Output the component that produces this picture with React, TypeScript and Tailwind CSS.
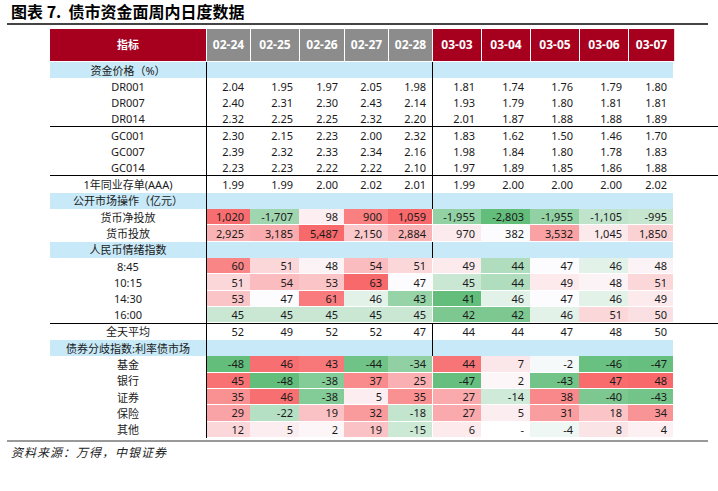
import React from "react";

type Row = {
  label: string;
  vals?: string[];
  section?: boolean;
  line?: boolean;
  scale?: (v: number) => string;
};

const W = [252, 252, 255];
const R = [248, 105, 107];
const G = [99, 190, 123];

function mix(a: number[], b: number[], t: number) {
  const c = Math.max(0, Math.min(1, t));
  return `rgb(${a.map((v, i) => Math.round(v + (b[i] - v) * c)).join(",")})`;
}
function s3(min: number, mid: number, max: number) {
  return (v: number) =>
    v >= mid ? mix(W, R, (v - mid) / (max - mid)) : mix(W, G, (mid - v) / (mid - min));
}
function s2(min: number, max: number) {
  return (v: number) => mix(W, R, (v - min) / (max - min));
}

const netScale = s3(-2803, 0, 1059);
const grossScale = s2(382, 5487);
const sentScale = s3(41, 47, 63);
const bondScale = s3(-48, 0, 48);

const rows: Row[] = [
  { label: "资金价格（%）", section: true },
  { label: "DR001", vals: ["2.04", "1.95", "1.97", "2.05", "1.98", "1.81", "1.74", "1.76", "1.79", "1.80"] },
  { label: "DR007", vals: ["2.40", "2.31", "2.30", "2.43", "2.14", "1.93", "1.79", "1.80", "1.81", "1.81"] },
  { label: "DR014", vals: ["2.32", "2.25", "2.25", "2.32", "2.20", "2.01", "1.87", "1.88", "1.88", "1.89"], line: true },
  { label: "GC001", vals: ["2.30", "2.15", "2.23", "2.00", "2.32", "1.83", "1.62", "1.50", "1.46", "1.70"] },
  { label: "GC007", vals: ["2.39", "2.32", "2.33", "2.34", "2.16", "1.98", "1.84", "1.80", "1.78", "1.83"] },
  { label: "GC014", vals: ["2.23", "2.23", "2.22", "2.22", "2.10", "1.97", "1.89", "1.85", "1.86", "1.88"], line: true },
  { label: "1年同业存单(AAA)", vals: ["1.99", "1.99", "2.00", "2.02", "2.01", "1.99", "2.00", "2.00", "2.00", "2.02"] },
  { label: "公开市场操作（亿元）", section: true },
  { label: "货币净投放", vals: ["1,020", "-1,707", "98", "900", "1,059", "-1,955", "-2,803", "-1,955", "-1,105", "-995"], scale: netScale },
  { label: "货币投放", vals: ["2,925", "3,185", "5,487", "2,150", "2,884", "970", "382", "3,532", "1,045", "1,850"], scale: grossScale },
  { label: "人民币情绪指数", section: true },
  { label: "8:45", vals: ["60", "51", "48", "54", "51", "49", "44", "47", "46", "48"], scale: sentScale },
  { label: "10:15", vals: ["51", "54", "53", "63", "47", "45", "44", "49", "48", "51"], scale: sentScale },
  { label: "14:30", vals: ["53", "47", "61", "46", "43", "41", "46", "47", "46", "49"], scale: sentScale },
  { label: "16:00", vals: ["45", "45", "45", "45", "45", "42", "42", "46", "51", "50"], scale: sentScale, line: true },
  { label: "全天平均", vals: ["52", "49", "52", "52", "47", "44", "44", "47", "48", "50"] },
  { label: "债券分歧指数:利率债市场", section: true },
  { label: "基金", vals: ["-48", "46", "43", "-44", "-34", "44", "7", "-2", "-46", "-47"], scale: bondScale },
  { label: "银行", vals: ["45", "-48", "-38", "37", "25", "-47", "2", "-43", "47", "48"], scale: bondScale },
  { label: "证券", vals: ["35", "46", "-38", "5", "35", "27", "-14", "38", "-40", "-43"], scale: bondScale },
  { label: "保险", vals: ["29", "-22", "19", "32", "-18", "27", "5", "31", "18", "34"], scale: bondScale },
  { label: "其他", vals: ["12", "5", "2", "19", "-15", "6", "-", "-4", "8", "4"], scale: bondScale },
];

const dates = ["02-24", "02-25", "02-26", "02-27", "02-28", "03-03", "03-04", "03-05", "03-06", "03-07"];

const colW = [
  "w-[43px]",
  "w-[49px]",
  "w-[45px]",
  "w-[44px]",
  "w-[45px] border-r border-black",
  "w-[48px]",
  "w-[49px]",
  "w-[49px]",
  "w-[49px]",
  "w-[45px]",
];

const headW = [
  "w-[44px] bg-[#8c8c8c] border-r border-white",
  "w-[49px] bg-[#8c8c8c] border-r border-white",
  "w-[45px] bg-[#8c8c8c] border-r border-white",
  "w-[44px] bg-[#8c8c8c] border-r border-white",
  "w-[44px] bg-[#8c8c8c] border-r border-white",
  "w-[49px] bg-[#a6001e] border-r border-white",
  "w-[49px] bg-[#a6001e] border-r border-white",
  "w-[49px] bg-[#a6001e] border-r border-white",
  "w-[49px] bg-[#a6001e] border-r border-white",
  "w-[46px] bg-[#a6001e] border-r border-[#f3d3da]",
];

const font = { fontFamily: '"Noto Sans", "Noto Sans CJK SC", sans-serif' };

export default function App() {
  return (
    <div className="w-[718px] h-[491px] bg-white text-[#1a1a1a] flex flex-col" style={font}>
      <div className="h-[23px] pl-[11px] pt-[3px]">
        <div
          className="text-[16px] leading-[16px] font-bold text-black"
          style={{ fontFamily: '"Noto Sans CJK SC", "Noto Sans", sans-serif' }}
        >
          图表&nbsp;7.&nbsp;&nbsp;债市资金面周内日度数据
        </div>
      </div>
      <div className="ml-[7px] w-[701px] h-[2px] bg-[#444444]" />

      <div className="ml-[50px] mt-[4px] flex flex-col">
        <div className="flex h-[32px] text-white font-bold text-[12px]">
          <div className="w-[157px] bg-[#a6001e] border-r border-white flex items-center justify-center text-[11px]">
            指标
          </div>
          {dates.map((d, i) => (
            <div key={d} className={`${headW[i]} flex items-center justify-center`}>
              {d}
            </div>
          ))}
        </div>

        <div className="mt-[1px] flex flex-col">
          {rows.map((r) => (
            <div
              key={r.label}
              className={`flex h-[16.35px] text-[11px] leading-none ${r.line ? "border-b border-black" : ""}`}
            >
              <div
                className={`w-[157px] border-r border-black flex items-center justify-center whitespace-nowrap ${
                  r.section ? "bg-[#c8e9f8]" : ""
                }`}
              >
                {r.label}
              </div>
              {colW.map((cw, i) => {
                const v = r.vals ? r.vals[i] : "";
                let bg: string | undefined;
                if (r.section) bg = "#c8e9f8";
                else if (r.scale) {
                  const n = parseFloat(v.replace(/,/g, ""));
                  bg = isNaN(n) ? "#ffffff" : r.scale(n);
                }
                return (
                  <div
                    key={i}
                    className={`${cw} flex items-center justify-end pr-[6px] ${
                      r.scale ? "border-b border-white" : ""
                    }`}
                    style={bg ? { backgroundColor: bg } : undefined}
                  >
                    {v}
                  </div>
                );
              })}
            </div>
          ))}
        </div>
      </div>

      <div className="ml-[7px] mt-[2px] w-[701px] h-[2px] bg-[#999999]" />
      <div
        className="pl-[11px] mt-[4px] text-[12px] leading-[12px] italic tracking-[1px] text-[#222]"
        style={{ fontFamily: '"Noto Sans CJK SC", sans-serif' }}
      >
        资料来源：万得，中银证券
      </div>
    </div>
  );
}
